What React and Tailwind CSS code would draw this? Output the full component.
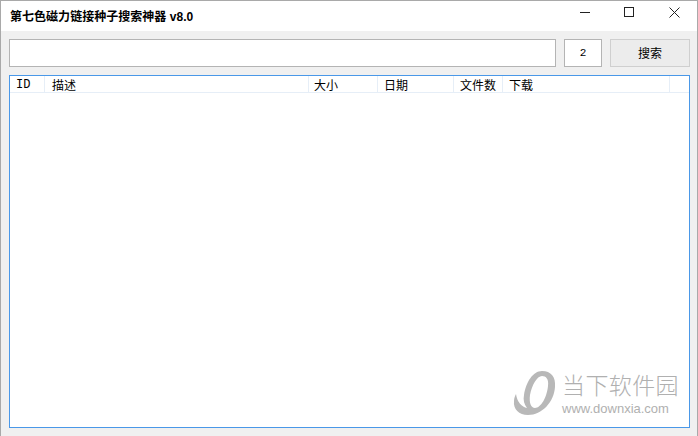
import React from 'react';

const columns = [
    { label: 'ID', width: 'w-[35px]', pad: 'pl-[6px]', mono: true },
    { label: '描述', width: 'w-[264px]', pad: 'pl-[7px]' },
    { label: '大小', width: 'w-[69px]', pad: 'pl-[5px]' },
    { label: '日期', width: 'w-[76px]', pad: 'pl-[6px]' },
    { label: '文件数', width: 'w-[49px]', pad: 'pl-[6px]' },
    { label: '下载', width: 'w-[167px]', pad: 'pl-[6px]' },
];

const Logo = () => (
    <svg width="44" height="46" viewBox="0 0 44 46" className="shrink-0">
        <path
            fillRule="evenodd"
            fill="#b8b8b8"
            d="M29 1C38 1 43 7 42 17C41 32 29 45 15 45C6 45 0 39 1 31C1 28 2 26 3 24C4 32 9 37 14 38C11 34 10 30 11 25C13 12 20 1 29 1ZM29 6C24 6 19 15 17 25C16 33 18 38 22 38C28 38 34 27 35 16C36 9 33 6 29 6Z"
        />
    </svg>
);

const App = () => {
    return (
        <div className="relative w-[698px] h-[436px] flex flex-col bg-[#f0f0f0] border border-[#a9a9a9] border-b-0 overflow-hidden font-['Noto_Sans_CJK_SC',sans-serif] text-black">
            <div className="h-[30px] shrink-0 bg-white flex items-center">
                <h1 className="pl-[9px] pt-[1px] text-[12px] font-bold leading-none flex-1 tracking-[0.03px] font-['Liberation_Sans','Noto_Sans_CJK_SC',sans-serif]">第七色磁力链接种子搜索神器 v8.0</h1>
                <div className="flex items-center h-full pb-[8px]">
                    <div className="w-[45px] flex justify-center">
                        <div className="w-[10px] h-px bg-[#222]" />
                    </div>
                    <div className="w-[45px] pr-[2px] flex justify-center">
                        <div className="w-[10px] h-[10px] border border-[#222]" />
                    </div>
                    <div className="w-[45px] pr-[1px] flex justify-center">
                        <svg width="11" height="11" viewBox="0 0 11 11">
                            <path d="M0.5 0.5L10.5 10.5M10.5 0.5L0.5 10.5" stroke="#222" strokeWidth="1" />
                        </svg>
                    </div>
                </div>
            </div>

            <div className="flex gap-[8px] h-[28px] mt-[8px] ml-[8px] mr-[7px] shrink-0">
                <input className="w-[547px] bg-white border border-[#b4b4b4] outline-none" />
                <div className="w-[38px] bg-white border border-[#b4b4b4] flex items-center justify-center text-[11px] font-['Liberation_Mono',monospace]">2</div>
                <button className="w-[80px] bg-[#ececec] border border-[#cfcfcf] text-[12px]">搜索</button>
            </div>

            <div className="mt-[8px] ml-[8px] mr-[7px] h-[353px] bg-[#4a98e8] p-px">
                <div className="h-full bg-white">
                    <div className="flex h-[17px] bg-white border-b border-[#e6eef7]">
                        {columns.map((col) => (
                            <div
                                key={col.label}
                                className={`${col.width} ${col.pad} pt-[2px] shrink-0 border-r border-[#e6eef7] flex items-center text-[12px] leading-none ${col.mono ? "font-['Liberation_Mono',monospace] text-[10px]" : ''}`}
                            >
                                {col.label}
                            </div>
                        ))}
                    </div>
                </div>
            </div>

            <div className="absolute left-[512px] top-[369px] flex items-center gap-[5px]">
                <Logo />
                <div className="flex flex-col text-[#b0b0b0]">
                    <span className="text-[23px] leading-[26px] tracking-[0.4px] font-light">当下软件园</span>
                    <span className="text-[13px] leading-[14px] mt-[5px] font-['Liberation_Sans',sans-serif]">www.downxia.com</span>
                </div>
            </div>
        </div>
    );
};

export default App;
